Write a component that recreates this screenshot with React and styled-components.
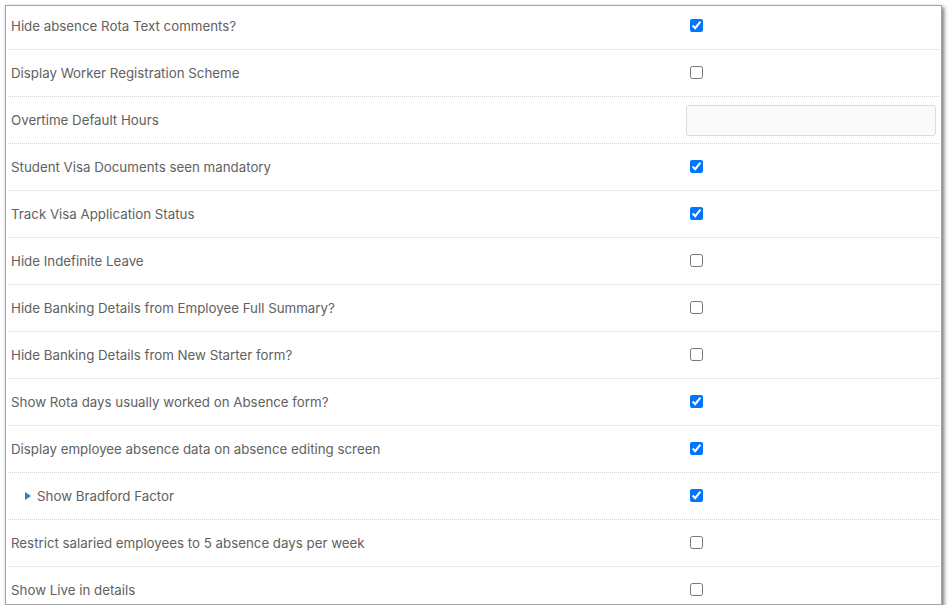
import React from 'react'
import styled, { createGlobalStyle } from 'styled-components'

const GlobalStyle = createGlobalStyle`
    body {
        margin: 0;
        background: #ffffff;
        font-family: Inter, "Noto Sans", sans-serif;
    }
`

const Panel = styled.div`
    margin: 5px 0 0 5px;
    width: 935px;
    height: 598px;
    border: 1px solid #a3a3a3;
    box-shadow: 2px 2px 4px rgba(0, 0, 0, 0.55);
    background: #ffffff;
    overflow: hidden;
`

const SettingsList = styled.div`
    margin-top: -3px;
    display: flex;
    flex-direction: column;
`

const SettingRow = styled.div`
    display: grid;
    grid-template-columns: 675px 1fr;
    align-items: center;
    height: 46px;
    margin: 0 2px;
    padding-left: 3px;
    border-bottom: 1px dotted #d4d4d4;
`

const Label = styled.div`
    display: flex;
    align-items: center;
    gap: 6px;
    padding-left: ${p => (p.$nested ? '14px' : '0')};
    font-size: 13.3px;
    color: #616161;
`

const Arrow = styled.span`
    width: 0;
    height: 0;
    border-top: 4px solid transparent;
    border-bottom: 4px solid transparent;
    border-left: 6px solid #2f80c0;
`

const Check = styled.input`
    margin: 0 0 0 4px;
    width: 13px;
    height: 13px;
`

const TextInput = styled.input`
    box-sizing: border-box;
    width: 250px;
    height: 31px;
    border: 1px solid #dcdcdc;
    border-radius: 3px;
    background: #fafafa;
    outline: none;
`

const settings = [
    { label: 'Hide absence Rota Text comments?', checked: true },
    { label: 'Display Worker Registration Scheme', checked: false },
    { label: 'Overtime Default Hours', input: true },
    { label: 'Student Visa Documents seen mandatory', checked: true },
    { label: 'Track Visa Application Status', checked: true },
    { label: 'Hide Indefinite Leave', checked: false },
    { label: 'Hide Banking Details from Employee Full Summary?', checked: false },
    { label: 'Hide Banking Details from New Starter form?', checked: false },
    { label: 'Show Rota days usually worked on Absence form?', checked: true },
    { label: 'Display employee absence data on absence editing screen', checked: true },
    { label: 'Show Bradford Factor', checked: true, nested: true },
    { label: 'Restrict salaried employees to 5 absence days per week', checked: false },
    { label: 'Show Live in details', checked: false },
]

export default function App() {
    return (
        <>
            <GlobalStyle />
            <Panel>
                <SettingsList>
                    {settings.map(s => (
                        <SettingRow key={s.label}>
                            <Label $nested={s.nested}>
                                {s.nested && <Arrow />}
                                {s.label}
                            </Label>
                            <div>
                                {s.input
                                    ? <TextInput type="text" />
                                    : <Check type="checkbox" defaultChecked={s.checked} />}
                            </div>
                        </SettingRow>
                    ))}
                </SettingsList>
            </Panel>
        </>
    )
}
